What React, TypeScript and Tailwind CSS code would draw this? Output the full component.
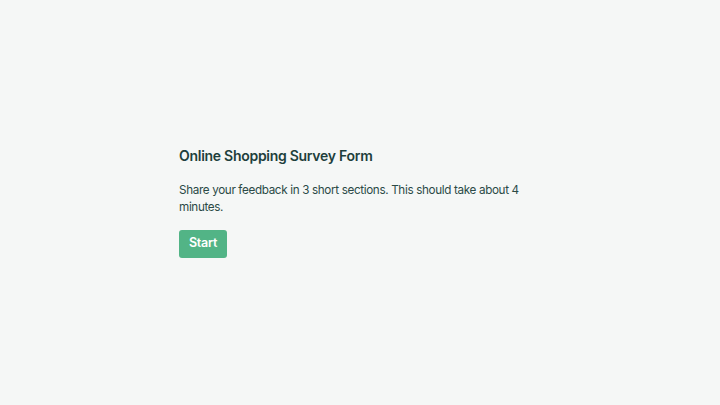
export default function App() {
  return (
    <div className="min-h-screen w-full bg-[#f5f7f6] flex items-center justify-center font-['Inter','Liberation_Sans',sans-serif]">
      <div className="w-[362px] pb-0.5 flex flex-col items-start">
        <h1 className="text-[14px] leading-5 font-semibold tracking-[-0.02em] text-[#1e3f3c]">
          Online Shopping Survey Form
        </h1>
        <p className="mt-4 text-[11.7px] leading-[17px] tracking-[-0.03em] text-[#2b4a46]">
          Share your feedback in 3 short sections. This should take about 4 minutes.
        </p>
        <button className="mt-[14px] h-7 w-12 rounded-[3px] bg-[#52b486] text-white text-[12.5px] font-semibold tracking-[-0.02em]">
          Start
        </button>
      </div>
    </div>
  );
}
